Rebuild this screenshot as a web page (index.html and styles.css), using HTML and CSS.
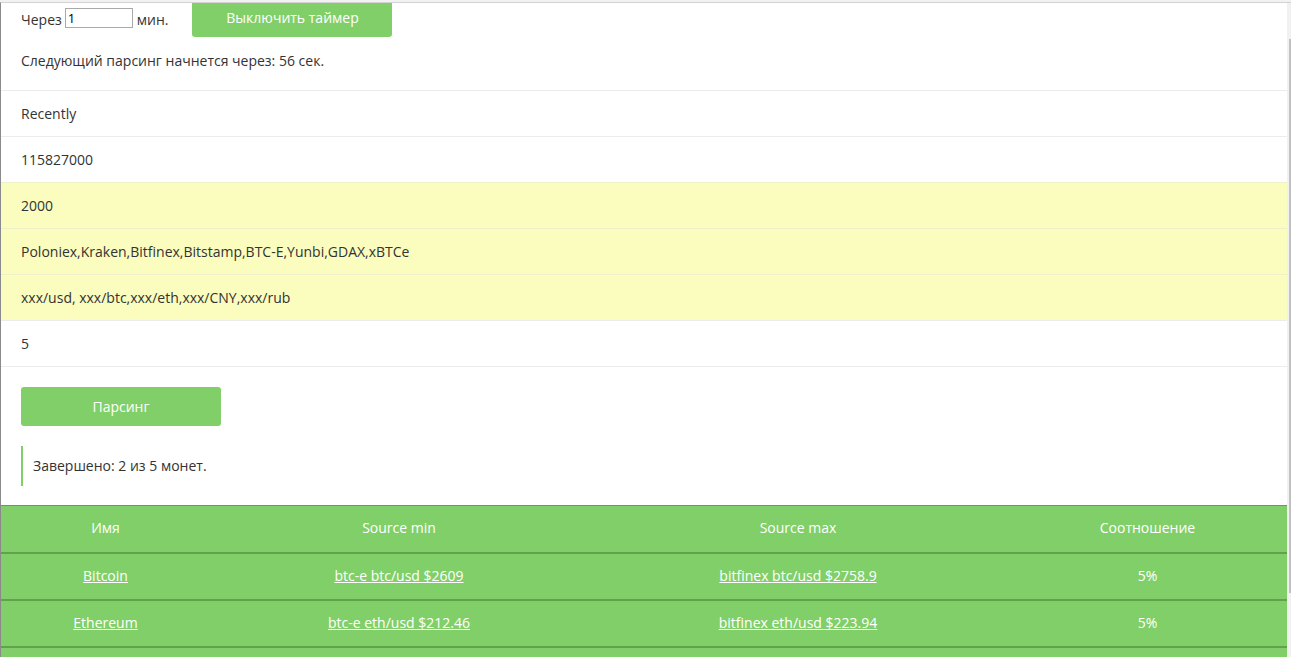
FILE: index.html
```html
<!DOCTYPE html>
<html lang="ru">
<head>
<meta charset="utf-8">
<title>Парсинг</title>
<link rel="stylesheet" href="styles.css">
</head>
<body>
<div class="page">
  <main class="main">
    <section class="timer">
      <div class="timer-row">
        <span class="label">Через</span>
        <input class="minutes" type="text" value="1">
        <span class="label">мин.</span>
        <button class="btn btn-timer">Выключить таймер</button>
      </div>
      <p class="next">Следующий парсинг начнется через: 56 сек.</p>
    </section>
    <div class="rows">
      <div class="row">Recently</div>
      <div class="row">115827000</div>
      <div class="row row-hl">2000</div>
      <div class="row row-hl">Poloniex,Kraken,Bitfinex,Bitstamp,BTC-E,Yunbi,GDAX,xBTCe</div>
      <div class="row row-hl">xxx/usd, xxx/btc,xxx/eth,xxx/CNY,xxx/rub</div>
      <div class="row row-last">5</div>
    </div>
    <div class="actions">
      <button class="btn btn-parse">Парсинг</button>
      <blockquote class="status">Завершено: 2 из 5 монет.</blockquote>
    </div>
    <table class="coins">
      <colgroup>
        <col class="c1"><col class="c2"><col class="c3"><col class="c4">
      </colgroup>
      <thead>
        <tr><th>Имя</th><th>Source min</th><th>Source max</th><th>Соотношение</th></tr>
      </thead>
      <tbody>
        <tr><td><a href="#">Bitcoin</a></td><td><a href="#">btc-e btc/usd $2609</a></td><td><a href="#">bitfinex btc/usd $2758.9</a></td><td>5%</td></tr>
        <tr><td><a href="#">Ethereum</a></td><td><a href="#">btc-e eth/usd $212.46</a></td><td><a href="#">bitfinex eth/usd $223.94</a></td><td>5%</td></tr>
        <tr><td></td><td></td><td></td><td></td></tr>
      </tbody>
    </table>
  </main>
  <div class="scrollbar"><div class="thumb"></div></div>
</div>
</body>
</html>
```
FILE: styles.css
```css
* { box-sizing: border-box; }
html, body { margin: 0; padding: 0; }
body {
  font-family: "Open Sans", "Liberation Sans", sans-serif;
  font-size: 14px;
  line-height: 20px;
  color: #333;
  background: #f2f2f2;
  overflow: hidden;
  height: 657px;
}
.page {
  display: flex;
  height: 657px;
  padding-top: 2px;
}
.main {
  flex: 1;
  background: #fff;
  border-top: 1px solid #d2d2d2;
  border-left: 1px solid #8a8a8a;
  overflow: hidden;
}
.scrollbar {
  width: 4px;
  background: #f1f1f1;
  border-top: 1px solid #d2d2d2;
  display: flex;
  flex-direction: column;
  align-items: flex-end;
}
.thumb {
  margin-top: 36px;
  width: 2px;
  height: 554px;
  background: #c1c1c1;
}
.timer {
  padding: 0 20px 19px;
}
.timer-row {
  display: flex;
  align-items: flex-start;
}
.label {
  margin-top: 7px;
}
.minutes {
  margin: 5px 4px 0 3px;
  width: 68px;
  height: 20px;
  border: 1px solid #a9a9a9;
  padding: 0 2px;
  font-family: "Open Sans", "Liberation Sans", sans-serif;
  font-size: 13px;
  color: #000;
  outline: none;
}
.btn {
  border: none;
  background: #81cf68;
  color: #fff;
  font-family: "Open Sans", "Liberation Sans", sans-serif;
  font-size: 14px;
  line-height: 20px;
  width: 200px;
  border-radius: 3px;
  cursor: pointer;
}
.btn-timer {
  margin-left: 24px;
  padding: 5px 0 9px;
  border-top-left-radius: 0;
  border-top-right-radius: 0;
}
.next {
  margin: 14px 0 0;
}
.row {
  border-top: 1px solid #ececec;
  padding: 13px 20px 12px;
  height: 46px;
}
.row-hl {
  background: #fafdbe;
  border-top-color: #eef0c8;
}
.row-last {
  border-bottom: 1px solid #ececec;
  height: 47px;
}
.actions {
  padding: 20px 20px 19px;
}
.btn-parse {
  display: block;
  padding: 10px 0 9px;
}
.status {
  margin: 20px 0 0;
  padding: 10px 10px;
  border-left: 2px solid #81cf68;
}
.coins {
  width: 100%;
  border-collapse: collapse;
  table-layout: fixed;
  background: #81cf68;
  color: #fff;
  border-top: 1px solid #609f4b;
}
.c1 { width: 209px; }
.c2 { width: 378px; }
.c3 { width: 420px; }
.c4 { width: auto; }
.coins th, .coins td {
  font-weight: normal;
  text-align: center;
  height: 47px;
  padding: 12px 8px 13px;
  border-bottom: 2px solid #62a24d;
}
.coins a {
  color: #fff;
  text-decoration: underline;
}
```
